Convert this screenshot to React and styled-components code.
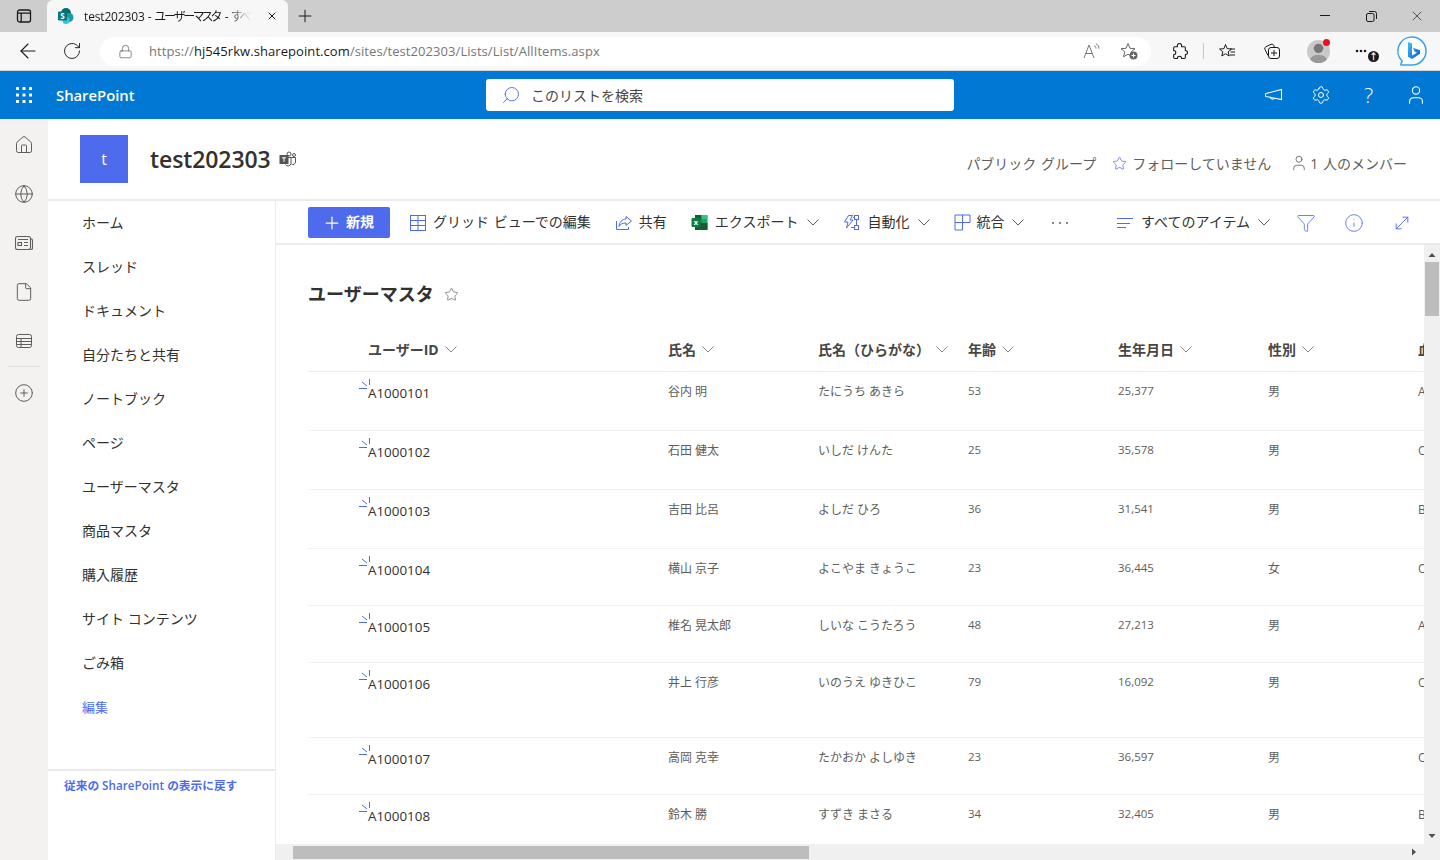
import styled, { createGlobalStyle } from "styled-components";
import {
  ArrowLeft,
  CirclePlus,
  File,
  Filter,
  Globe,
  Home,
  Info,
  Lock,
  MoveDiagonal,
  Plus,
  RotateCw,
  Search,
  Settings,
  Star,
  User,
  X,
} from "lucide-react";

const BLUE = "#4f6bed";
const FONT = `"Open Sans", "Noto Sans CJK JP", sans-serif`;

const GlobalStyle = createGlobalStyle`
  html, body { margin: 0; padding: 0; background: #fff; }
  body { font-family: ${FONT}; color: #323130; }
  * { box-sizing: border-box; }
`;

const NAV_ITEMS = [
  "ホーム",
  "スレッド",
  "ドキュメント",
  "自分たちと共有",
  "ノートブック",
  "ページ",
  "ユーザーマスタ",
  "商品マスタ",
  "購入履歴",
  "サイト コンテンツ",
  "ごみ箱",
];

const COLUMNS = [
  { label: "氏名", width: 150 },
  { label: "氏名（ひらがな）", width: 150 },
  { label: "年齢", width: 150, num: true },
  { label: "生年月日", width: 150, num: true },
  { label: "性別", width: 150 },
];

const ROWS = [
  { id: "A1000101", h: 59, cells: ["谷内 明", "たにうち あきら", "53", "25,377", "男"], blood: "A" },
  { id: "A1000102", h: 59, cells: ["石田 健太", "いしだ けんた", "25", "35,578", "男"], blood: "O" },
  { id: "A1000103", h: 59, cells: ["吉田 比呂", "よしだ ひろ", "36", "31,541", "男"], blood: "B" },
  { id: "A1000104", h: 57, cells: ["横山 京子", "よこやま きょうこ", "23", "36,445", "女"], blood: "O" },
  { id: "A1000105", h: 57, cells: ["椎名 晃太郎", "しいな こうたろう", "48", "27,213", "男"], blood: "A" },
  { id: "A1000106", h: 75, cells: ["井上 行彦", "いのうえ ゆきひこ", "79", "16,092", "男"], blood: "O" },
  { id: "A1000107", h: 57, cells: ["高岡 克幸", "たかおか よしゆき", "23", "36,597", "男"], blood: "O" },
  { id: "A1000108", h: 57, cells: ["鈴木 勝", "すずき まさる", "34", "32,405", "男"], blood: "B" },
];

const Page = styled.div`
  width: 1440px;
  height: 860px;
  display: flex;
  flex-direction: column;
  overflow: hidden;
`;

/* browser chrome */
const TabStrip = styled.div`
  height: 32px;
  background: #cdcdcd;
  display: flex;
  align-items: flex-end;
  flex-shrink: 0;
`;
const TabActions = styled.div`
  width: 47px;
  height: 32px;
  display: flex;
  align-items: center;
  justify-content: center;
`;
const Tab = styled.div`
  width: 241px;
  height: 32px;
  background: #f7f7f7;
  border-radius: 6px 6px 0 0;
  display: flex;
  align-items: center;
  padding: 0 10px;
  font-size: 12px;
  color: #1a1a1a;
  gap: 10px;
`;
const TabTitle = styled.span`
  flex: 1;
  white-space: nowrap;
  overflow: hidden;
  letter-spacing: -0.15px;
  font-feature-settings: "palt";
  mask-image: linear-gradient(90deg, #000 84%, transparent 97%);
`;
const Kana = styled.span`
  letter-spacing: -1.9px;
  margin-right: 2px;
`;
const NewTab = styled.div`
  width: 34px;
  height: 32px;
  display: flex;
  align-items: center;
  justify-content: center;
`;
const WindowButtons = styled.div`
  margin-left: auto;
  display: flex;
  height: 32px;
`;
const WindowButton = styled.div`
  width: 46px;
  display: flex;
  align-items: center;
  justify-content: center;
`;
const ToolBar = styled.div`
  height: 39px;
  background: #f7f7f7;
  border-bottom: 1px solid #d6d6d6;
  display: flex;
  align-items: center;
  flex-shrink: 0;
`;
const ToolButton = styled.div`
  width: ${(p) => p.$w || 44}px;
  height: 32px;
  padding-left: ${(p) => p.$pl || 0}px;
  display: flex;
  align-items: center;
  justify-content: center;
  flex-shrink: 0;
  position: relative;
`;
const Omnibox = styled.div`
  width: 1051px;
  height: 29px;
  margin-left: 12px;
  background: #fff;
  border-radius: 15px;
  display: flex;
  align-items: center;
  padding: 0 4px 0 18px;
  font-size: 13px;
  flex-shrink: 0;
`;
const Url = styled.div`
  margin-left: 16px;
  color: #767676;
  flex: 1;
  white-space: nowrap;
  letter-spacing: 0.07px;
  b {
    font-weight: 400;
    color: #1a1a1a;
  }
`;
const OmniIcon = styled.div`
  width: 37px;
  display: flex;
  justify-content: center;
  align-items: center;
`;
const ToolDivider = styled.div`
  width: 1px;
  height: 16px;
  background: #c8c8c8;
  flex-shrink: 0;
`;
const Avatar = styled.div`
  width: 23px;
  height: 23px;
  border-radius: 50%;
  background: #c9c9c9;
  overflow: hidden;
  display: flex;
`;
const RedDot = styled.span`
  position: absolute;
  width: 7px;
  height: 7px;
  border-radius: 50%;
  background: #e81123;
  right: 14px;
  top: 4px;
`;
const MoreBadge = styled.span`
  position: absolute;
  width: 11px;
  height: 11px;
  border-radius: 50%;
  background: #1a1a1a;
  right: 7px;
  bottom: 5px;
  color: #fff;
  font-size: 9px;
  font-weight: 700;
  line-height: 11px;
  text-align: center;
`;

/* suite bar */
const SuiteBar = styled.div`
  height: 48px;
  background: #0078d4;
  color: #fff;
  display: flex;
  align-items: center;
  flex-shrink: 0;
`;
const Waffle = styled.div`
  width: 48px;
  display: flex;
  justify-content: center;
`;
const Brand = styled.div`
  margin-left: 8px;
  width: 430px;
  font-size: 14.8px;
  font-weight: 600;
`;
const SearchBox = styled.div`
  width: 468px;
  height: 32px;
  background: #fff;
  border-radius: 3px;
  display: flex;
  align-items: center;
  gap: 10px;
  padding-left: 15px;
  font-size: 14px;
  color: #484644;
`;
const SuiteIcons = styled.div`
  margin-left: auto;
  display: flex;
  align-items: center;
`;
const SuiteIcon = styled.div`
  width: 47.5px;
  display: flex;
  align-items: center;
  justify-content: center;
  font-size: 21px;
  font-weight: 300;
`;

/* body */
const Body = styled.div`
  flex: 1;
  display: flex;
  min-height: 0;
`;
const Rail = styled.div`
  width: 48px;
  background: #f3f2f1;
  display: flex;
  flex-direction: column;
  align-items: center;
  padding-top: 1px;
  flex-shrink: 0;
`;
const RailIcon = styled.div`
  height: 49px;
  width: 48px;
  display: flex;
  align-items: center;
  justify-content: center;
  color: #605e5c;
`;
const RailDivider = styled.div`
  width: 32px;
  height: 1px;
  margin: 1px 0;
  background: #e1dfdd;
`;
const Site = styled.div`
  flex: 1;
  display: flex;
  flex-direction: column;
  min-width: 0;
`;
const SiteHeader = styled.div`
  height: 82px;
  border-bottom: 2px solid #edebe9;
  display: flex;
  align-items: flex-start;
  padding: 16px 33px 0 32px;
  flex-shrink: 0;
`;
const SiteLogo = styled.div`
  width: 48px;
  height: 48px;
  background: ${BLUE};
  color: #fff;
  font-size: 16px;
  display: flex;
  align-items: center;
  justify-content: center;
`;
const SiteName = styled.div`
  margin-left: 22px;
  height: 48px;
  display: flex;
  align-items: center;
  gap: 8px;
  font-size: 23px;
  font-weight: 600;
  letter-spacing: -0.1px;
  color: #323130;
`;
const SiteMeta = styled.div`
  margin-left: auto;
  margin-top: 17px;
  display: flex;
  align-items: center;
  height: 22px;
  font-size: 14px;
  color: #605e5c;
  white-space: nowrap;
`;
const MetaItem = styled.span`
  display: flex;
  align-items: center;
  gap: ${(p) => p.$gap || 3}px;
  margin-left: ${(p) => p.$ml || 0}px;
  word-spacing: 1px;
`;
const Columns = styled.div`
  flex: 1;
  display: flex;
  min-height: 0;
`;
const SideNav = styled.div`
  width: 228px;
  border-right: 1px solid #edebe9;
  display: flex;
  flex-direction: column;
  flex-shrink: 0;
`;
const NavItem = styled.div`
  height: 44px;
  display: flex;
  align-items: center;
  padding: 0 0 2px 34px;
  font-size: ${(p) => (p.$edit ? 13 : 14)}px;
  color: ${(p) => (p.$edit ? BLUE : "#323130")};
`;
const NavFooter = styled.div`
  margin-top: 40px;
  border-top: 2px solid #edebe9;
  padding: 5px 0 0 16px;
  font-size: 11.7px;
  color: ${BLUE};
  font-weight: 600;
`;
const Content = styled.div`
  flex: 1;
  min-width: 0;
  display: flex;
  flex-direction: column;
`;
const CommandBar = styled.div`
  height: 44px;
  border-bottom: 2px solid #edebe9;
  padding: 6px 28px 0 32px;
  display: flex;
  align-items: flex-start;
  gap: 24px;
  flex-shrink: 0;
  font-size: 14px;
`;
const NewButton = styled.div`
  width: 82px;
  height: 31px;
  background: ${BLUE};
  border-radius: 2px;
  color: #fff;
  font-weight: 600;
  display: flex;
  align-items: center;
  gap: 4px;
  padding-left: 14px;
  margin-right: -5px;
`;
const Command = styled.div`
  height: 31px;
  display: flex;
  align-items: center;
  gap: ${(p) => p.$gap || 7}px;
  margin-left: ${(p) => p.$ml || 0}px;
  margin-right: ${(p) => p.$mr || 0}px;
  color: #323130;
  white-space: nowrap;
`;
const Label = styled.span`
  margin-top: -3px;
  word-spacing: 1px;
`;
const CommandRight = styled.div`
  margin-left: auto;
  display: flex;
  gap: 28px;
`;
const ListArea = styled.div`
  flex: 1;
  min-height: 0;
  display: flex;
  flex-direction: column;
`;
const ListRow = styled.div`
  flex: 1;
  min-height: 0;
  display: flex;
`;
const Viewport = styled.div`
  flex: 1;
  min-width: 0;
  overflow: hidden;
  padding: 0 0 0 32px;
`;
const ListTitle = styled.div`
  height: 85px;
  padding-top: 37px;
  display: flex;
  align-items: flex-start;
  gap: 10px;
  font-size: 18px;
  font-weight: 700;
  line-height: 24px;
  color: #323130;
`;
const HeaderRow = styled.div`
  height: 42px;
  display: flex;
  align-items: center;
  border-bottom: 1px solid #edebe9;
  width: 1200px;
  font-size: 14px;
`;
const HeaderCell = styled.div`
  width: ${(p) => p.$w}px;
  flex-shrink: 0;
  display: flex;
  align-items: center;
  gap: 6px;
  padding-bottom: 3px;
  white-space: nowrap;
  color: #484644;
  font-weight: 700;
`;
const DataRow = styled.div`
  height: ${(p) => p.$h}px;
  display: flex;
  align-items: flex-start;
  border-bottom: 1px solid #f3f2f1;
  width: 1200px;
  font-size: 12px;
  color: #605e5c;
  flex-shrink: 0;
`;
const Spacer = styled.div`
  width: 60px;
  flex-shrink: 0;
`;
const IdCell = styled.div`
  width: 300px;
  flex-shrink: 0;
  position: relative;
  padding-top: 11px;
  font-size: 13.4px;
  line-height: 20px;
  color: #323130;
`;
const Glimmer = styled.svg`
  position: absolute;
  left: -9px;
  top: 7px;
`;
const Cell = styled.div`
  width: ${(p) => p.$w}px;
  flex-shrink: 0;
  padding-top: ${(p) => (p.$num ? 10 : 11)}px;
  line-height: 17px;
  font-size: ${(p) => (p.$num ? 11.5 : 12)}px;
`;
const VScroll = styled.div`
  width: 16px;
  background: #f0f0f0;
  flex-shrink: 0;
  display: flex;
  flex-direction: column;
  align-items: center;
  padding-top: 6px;
`;
const VThumb = styled.div`
  width: 14px;
  height: 54px;
  margin-top: 3px;
  background: #bdbdbd;
`;
const BottomArrow = styled.div`
  margin-top: auto;
  margin-bottom: 4px;
  display: flex;
`;
const HScroll = styled.div`
  height: 16px;
  background: #f0f0f0;
  display: flex;
  align-items: center;
  flex-shrink: 0;
`;
const HThumb = styled.div`
  width: 516px;
  height: 13px;
  margin-left: 11px;
  background: #bdbdbd;
`;
const ArrowLeftBox = styled.div`
  width: 5px;
  padding-left: 6px;
  display: flex;
`;
const ArrowRightBox = styled.div`
  margin-left: auto;
  padding-right: 22px;
  display: flex;
`;
const ChevronSvg = styled.svg`
  margin-left: ${(p) => p.$ml || 0}px;
  flex-shrink: 0;
`;

function Chevron({ color = "#605e5c", ml }) {
  return (
    <ChevronSvg $ml={ml} width="12" height="7" viewBox="0 0 12 7" fill="none" stroke={color}>
      <path d="M.5.5 6 6 11.500.5" />
    </ChevronSvg>
  );
}

function TabsIcon() {
  return (
    <svg width="16" height="16" viewBox="0 0 16 16" fill="none" stroke="#1a1a1a" strokeWidth="1.3">
      <rect x="1.5" y="2" width="13" height="12" rx="2" />
      <path d="M1.5 5.2h13M5.2 5.2V14" />
    </svg>
  );
}

function SharePointFavicon() {
  return (
    <svg width="17" height="16" viewBox="0 0 17 16" style={{ flexShrink: 0 }}>
      <circle cx="9" cy="5" r="5" fill="#036c70" />
      <circle cx="12" cy="9.5" r="4.5" fill="#1a9ba1" />
      <circle cx="9" cy="12.5" r="3.5" fill="#37c6d0" />
      <rect x="1" y="3.5" width="9" height="9" rx="1" fill="#03787c" />
      <text x="5.5" y="11" fontSize="8" fontWeight="700" fill="#fff" textAnchor="middle">
        S
      </text>
    </svg>
  );
}

function MinimizeIcon() {
  return (
    <svg width="10" height="2" viewBox="0 0 10 2" stroke="#1a1a1a">
      <path d="M0 .5h10" />
    </svg>
  );
}

function RestoreIcon() {
  return (
    <svg width="11" height="11" viewBox="0 0 11 11" fill="none" stroke="#1a1a1a">
      <rect x="0.5" y="2.5" width="7.5" height="8" rx="1.5" />
      <path d="M3 .5h5.5a2 2 0 0 1 2 2V8" />
    </svg>
  );
}

function ReadAloud() {
  return (
    <svg width="18" height="16" viewBox="0 0 18 16" fill="none" stroke="#767676">
      <path d="M1 15 6 2l5 13M2.8 10.5h6.4" />
      <path d="M11 2.500c1.200.6 2 1.600 2 3M13 .8c2 1 3 2.600 3 4.800" />
    </svg>
  );
}

function StarAdd() {
  return (
    <svg width="18" height="18" viewBox="0 0 18 18">
      <path
        d="M8 1.500 10 6.300l5 .4-3.800 3.200 1.200 4.900L8 12.200l-4.400 2.600 1.200-4.900L1 6.700l5-.4z"
        fill="none"
        stroke="#666"
      />
      <circle cx="13.500" cy="13.500" r="4" fill="#666" />
      <path d="M11.500 13.500h4M13.500 11.500v4" stroke="#fff" />
    </svg>
  );
}

function ExtensionIcon() {
  return (
    <svg width="17" height="17" viewBox="0 0 16 16" fill="none" stroke="#1a1a1a">
      <path d="M6 2.500a2 2 0 0 1 4 0V3.500h2.500a1 1 0 0 1 1 1V7a2 2 0 0 1 0 4v2.500a1 1 0 0 1-1 1H10a2 2 0 0 0-4 0H3.500a1 1 0 0 1-1-1V11a2 2 0 0 0 0-4V4.500a1 1 0 0 1 1-1H6z" />
    </svg>
  );
}

function FavoritesIcon() {
  return (
    <svg width="18" height="16" viewBox="0 0 18 16" fill="none" stroke="#1a1a1a">
      <path d="M6.500 1.500 8.200 5.700l4.300.3-3.300 2.800 1 4.200-3.700-2.300L2.800 13l1-4.200L.6 6l4.300-.3z" />
      <path d="M11 6h5M11.500 9h4.500M11 12h5" />
    </svg>
  );
}

function CollectionsIcon() {
  return (
    <svg width="18" height="18" viewBox="0 0 18 18" fill="none" stroke="#1a1a1a">
      <rect x="5.500" y="5.500" width="11" height="11" rx="2.500" />
      <path d="M11 8v6M8 11h6" />
      <path d="M5 13.500 2 7.500a2 2 0 0 1 1-2.800L8 2.300a2 2 0 0 1 2.700 1l.6 1.700" />
    </svg>
  );
}

function BingIcon() {
  return (
    <svg width="32" height="32" viewBox="0 0 32 32">
      <defs>
        <linearGradient id="bingB" x1="0" y1="0" x2="1" y2="1">
          <stop offset="0" stopColor="#36c3f0" />
          <stop offset="1" stopColor="#1259d6" />
        </linearGradient>
      </defs>
      <path
        d="M16 2a14 14 0 0 1 0 28H5.500c-.8 0-1-.8-.6-1.400l1.400-2.400A14 14 0 0 1 16 2z"
        fill="#fff"
        stroke="#3aa0ee"
        strokeWidth="1.500"
      />
      <path d="M12 7l4 1.500v12l5-2.800-2.500-1.200-1.500-3.800 7 2.500v3.500L16 24l-4-2.200z" fill="url(#bingB)" />
    </svg>
  );
}

function WaffleIcon() {
  const dots = [];
  for (let r = 0; r < 3; r++) {
    for (let c = 0; c < 3; c++) {
      dots.push(<rect key={`${r}-${c}`} x={c * 6.5} y={r * 6.5} width="3" height="3" rx="0.6" fill="#fff" />);
    }
  }
  return (
    <svg width="16" height="16" viewBox="0 0 16 16">
      {dots}
    </svg>
  );
}

function MegaphoneIcon() {
  return (
    <svg width="18" height="14" viewBox="0 0 18 14" fill="none" stroke="#fff" strokeWidth="1.100">
      <path d="M1 5.500 16.500 1.500v10L1 8.500c-.6-.2-.6-2.800 0-3z" />
      <path d="M5.500 9.500c.2 2 3.300 2.300 4 .6" />
    </svg>
  );
}

function TeamsIcon() {
  return (
    <svg width="18" height="16" viewBox="0 0 18 16" fill="none" stroke="#555">
      <circle cx="10" cy="3" r="2" />
      <circle cx="15" cy="4" r="1.500" />
      <path d="M8 6.500h8.500V11a2.500 2.500 0 0 1-4 2" />
      <path d="M7 6.500h5v6a3 3 0 0 1-5.500 1" />
      <rect x="1" y="4.500" width="8" height="8" fill="#555" />
      <path d="M3 6.800h4M5 6.800v4" stroke="#fff" />
    </svg>
  );
}

function NewsIcon() {
  return (
    <svg width="18" height="16" viewBox="0 0 18 16" fill="none" stroke="currentColor" strokeWidth="1.100">
      <rect x="0.500" y="1.500" width="15" height="13" rx="2" />
      <path d="M15.500 4h.5a1.500 1.500 0 0 1 1.500 1.500V13a1.500 1.500 0 0 1-2 1.400" />
      <path d="M3 4.500h10M9 7.500h4M9 10.500h4" />
      <rect x="3" y="7.500" width="3.500" height="3" />
    </svg>
  );
}

function ListIcon() {
  return (
    <svg width="18" height="18" viewBox="0 0 18 18" fill="none" stroke="#605e5c">
      <rect x="1.500" y="2.500" width="15" height="13" rx="2" />
      <path d="M1.500 6.500h15M1.500 9.500h15M1.500 12.500h15M6 6.500v9" />
    </svg>
  );
}

function GridIcon() {
  return (
    <svg width="18" height="18" viewBox="0 0 18 18" fill="none" stroke={BLUE}>
      <rect x="1.500" y="1.500" width="15" height="15" />
      <path d="M1.500 6.500h15M1.500 11.500h15M9 1.500v15" />
    </svg>
  );
}

function ShareIcon() {
  return (
    <svg width="18" height="16" viewBox="0 0 18 16" fill="none" stroke={BLUE}>
      <path d="M11 1.500 16.500 6 11 10.500V8c-3.500 0-5.500 1-7 3.500C4.500 7 7 4.300 11 4z" />
      <path d="M1.500 6v8.500h12V12" />
    </svg>
  );
}

function ExcelIcon() {
  return (
    <svg width="17" height="17" viewBox="0 0 17 17">
      <rect x="4" y="1" width="12.500" height="15" rx="1" fill="#21a366" />
      <rect x="4" y="1" width="6.500" height="4" fill="#185c37" />
      <rect x="10.500" y="1" width="6" height="4" fill="#33c481" />
      <rect x="4" y="5" width="6.500" height="4" fill="#107c41" />
      <rect x="4" y="9" width="12.500" height="7" fill="#185c37" />
      <rect x="0.500" y="4" width="9" height="9" rx="1" fill="#107c41" />
      <text x="5" y="11.200" fontSize="7.500" fontWeight="700" fill="#fff" textAnchor="middle">
        x
      </text>
    </svg>
  );
}

function AutomateIcon() {
  return (
    <svg width="17" height="17" viewBox="0 0 17 17" fill="none" stroke={BLUE}>
      <path d="M5.500 1.500h4L7 6h3L3.500 14 5 8H1.500z" />
      <rect x="11.500" y="1.500" width="4" height="4" />
      <rect x="11.500" y="11.500" width="4" height="4" />
      <path d="M13.500 5.500v6M8 13.500h3.500M10 3.500h1.500" />
    </svg>
  );
}

function IntegrateIcon() {
  return (
    <svg width="17" height="17" viewBox="0 0 17 17" fill="none" stroke={BLUE}>
      <path d="M1 1h15v7.500H8.500V16H1zM1 8.500h7.500M8.500 1v7.500" />
    </svg>
  );
}

function ViewIcon() {
  return (
    <svg width="16" height="12" viewBox="0 0 16 12" fill="none" stroke={BLUE}>
      <path d="M0 1.500h16M0 6.500h13M0 10.500h9" />
    </svg>
  );
}

function GlimmerIcon() {
  return (
    <Glimmer width="11" height="10" viewBox="0 0 11 10" fill="none" stroke={BLUE}>
      <path d="M10.500 0v6M3 3l5 4M0 9.500h8" />
    </Glimmer>
  );
}

function Caret({ d, size = 8 }) {
  return (
    <svg width={size} height={size} viewBox="0 0 8 8">
      <path d={d} fill="#505050" />
    </svg>
  );
}

function App() {
  return (
    <Page>
      <GlobalStyle />
      <TabStrip>
        <TabActions>
          <TabsIcon />
        </TabActions>
        <Tab>
          <SharePointFavicon />
          <TabTitle>
            test202303 - <Kana>ユーザーマスタ</Kana> - <Kana>すべてのアイテム</Kana>
          </TabTitle>
          <X size={12} color="#1a1a1a" />
        </Tab>
        <NewTab>
          <Plus size={20} strokeWidth={1.2} color="#1a1a1a" />
        </NewTab>
        <WindowButtons>
          <WindowButton>
            <MinimizeIcon />
          </WindowButton>
          <WindowButton>
            <RestoreIcon />
          </WindowButton>
          <WindowButton>
            <X size={16} strokeWidth={1} color="#1a1a1a" />
          </WindowButton>
        </WindowButtons>
      </TabStrip>
      <ToolBar>
        <ToolButton $w={56}>
          <ArrowLeft size={24} strokeWidth={1.1} color="#1a1a1a" />
        </ToolButton>
        <ToolButton $w={32}>
          <RotateCw size={20} strokeWidth={1.1} color="#1a1a1a" />
        </ToolButton>
        <Omnibox>
          <Lock size={15} strokeWidth={1.2} color="#666" />
          <Url>
            https://<b>hj545rkw.sharepoint.com</b>/sites/test202303/Lists/List/AllItems.aspx
          </Url>
          <OmniIcon>
            <ReadAloud />
          </OmniIcon>
          <OmniIcon>
            <StarAdd />
          </OmniIcon>
        </Omnibox>
        <ToolButton $w={52} $pl={4}>
          <ExtensionIcon />
        </ToolButton>
        <ToolDivider />
        <ToolButton $w={48}>
          <FavoritesIcon />
        </ToolButton>
        <ToolButton $w={40}>
          <CollectionsIcon />
        </ToolButton>
        <ToolButton $w={52}>
          <Avatar>
            <svg width="23" height="23" viewBox="0 0 22 22">
              <circle cx="11" cy="8" r="4.500" fill="#777" />
              <ellipse cx="11" cy="19" rx="8" ry="5" fill="#999" />
            </svg>
          </Avatar>
          <RedDot />
        </ToolButton>
        <ToolButton $w={42}>
          <svg width="12" height="4" viewBox="0 0 12 4" style={{ marginRight: 8 }}>
            <circle cx="2" cy="2" r="1.300" fill="#1a1a1a" />
            <circle cx="6" cy="2" r="1.300" fill="#1a1a1a" />
            <circle cx="10" cy="2" r="1.300" fill="#1a1a1a" />
          </svg>
          <MoreBadge>↑</MoreBadge>
        </ToolButton>
        <ToolButton $w={52}>
          <BingIcon />
        </ToolButton>
      </ToolBar>
      <SuiteBar>
        <Waffle>
          <WaffleIcon />
        </Waffle>
        <Brand>SharePoint</Brand>
        <SearchBox>
          <Search size={20} strokeWidth={1.1} color={BLUE} style={{ transform: "scaleX(-1)" }} />
          このリストを検索
        </SearchBox>
        <SuiteIcons>
          <SuiteIcon>
            <MegaphoneIcon />
          </SuiteIcon>
          <SuiteIcon>
            <Settings size={20} strokeWidth={1.200} />
          </SuiteIcon>
          <SuiteIcon>?</SuiteIcon>
          <SuiteIcon>
            <User size={22} strokeWidth={1.200} />
          </SuiteIcon>
        </SuiteIcons>
      </SuiteBar>
      <Body>
        <Rail>
          <RailIcon>
            <Home size={20} strokeWidth={1.200} />
          </RailIcon>
          <RailIcon>
            <Globe size={20} strokeWidth={1.200} />
          </RailIcon>
          <RailIcon>
            <NewsIcon />
          </RailIcon>
          <RailIcon>
            <File size={20} strokeWidth={1.200} />
          </RailIcon>
          <RailIcon>
            <ListIcon />
          </RailIcon>
          <RailDivider />
          <RailIcon>
            <CirclePlus size={20} strokeWidth={1.200} />
          </RailIcon>
        </Rail>
        <Site>
          <SiteHeader>
            <SiteLogo>t</SiteLogo>
            <SiteName>
              test202303
              <TeamsIcon />
            </SiteName>
            <SiteMeta>
              <MetaItem>パブリック グループ</MetaItem>
              <MetaItem $ml={16} $gap={5}>
                <Star size={15} strokeWidth={1.200} color={BLUE} />
                <span>フォローしていません</span>
              </MetaItem>
              <MetaItem $ml={19} $gap={2}>
                <User size={18} strokeWidth={1.100} />
                <span>1 人のメンバー</span>
              </MetaItem>
            </SiteMeta>
          </SiteHeader>
          <Columns>
            <SideNav>
              {NAV_ITEMS.map((item) => (
                <NavItem key={item}>{item}</NavItem>
              ))}
              <NavItem $edit>編集</NavItem>
              <NavFooter>従来の SharePoint の表示に戻す</NavFooter>
            </SideNav>
            <Content>
              <CommandBar>
                <NewButton>
                  <Plus size={20} strokeWidth={1.500} />
                  <Label>新規</Label>
                </NewButton>
                <Command $gap={6}>
                  <GridIcon />
                  <Label>グリッド ビューでの編集</Label>
                </Command>
                <Command $gap={6}>
                  <ShareIcon />
                  <Label>共有</Label>
                </Command>
                <Command>
                  <ExcelIcon />
                  <Label>エクスポート</Label>
                  <Chevron ml={2} />
                </Command>
                <Command>
                  <AutomateIcon />
                  <Label>自動化</Label>
                  <Chevron ml={2} />
                </Command>
                <Command $gap={5}>
                  <IntegrateIcon />
                  <Label>統合</Label>
                  <Chevron ml={3} />
                </Command>
                <Command $ml={3}>
                  <svg width="18" height="4" viewBox="0 0 18 4" fill="#605e5c">
                    <circle cx="2" cy="2" r="1" />
                    <circle cx="9" cy="2" r="1" />
                    <circle cx="16" cy="2" r="1" />
                  </svg>
                </Command>
                <CommandRight>
                  <Command $gap={8} $mr={-2}>
                    <ViewIcon />
                    <Label>すべてのアイテム</Label>
                    <Chevron />
                  </Command>
                  <Command>
                    <Filter size={20} strokeWidth={1} color={BLUE} />
                  </Command>
                  <Command>
                    <Info size={20} strokeWidth={1} color={BLUE} />
                  </Command>
                  <Command>
                    <MoveDiagonal size={20} strokeWidth={1.100} color={BLUE} />
                  </Command>
                </CommandRight>
              </CommandBar>
              <ListArea>
                <ListRow>
                  <Viewport>
                    <ListTitle>
                      ユーザーマスタ
                      <Star size={15} strokeWidth={1.100} color="#605e5c" style={{ marginTop: 5 }} />
                    </ListTitle>
                    <HeaderRow>
                      <Spacer />
                      <HeaderCell $w={300}>
                        ユーザーID
                        <Chevron color="#8a8886" />
                      </HeaderCell>
                      {COLUMNS.map((col) => (
                        <HeaderCell key={col.label} $w={col.width}>
                          {col.label}
                          <Chevron color="#8a8886" />
                        </HeaderCell>
                      ))}
                      <HeaderCell $w={100}>血液型</HeaderCell>
                    </HeaderRow>
                    {ROWS.map((row) => (
                      <DataRow key={row.id} $h={row.h}>
                        <Spacer />
                        <IdCell>
                          <GlimmerIcon />
                          {row.id}
                        </IdCell>
                        {row.cells.map((text, i) => (
                          <Cell key={i} $w={COLUMNS[i].width} $num={COLUMNS[i].num}>
                            {text}
                          </Cell>
                        ))}
                        <Cell $w={100}>{row.blood}</Cell>
                      </DataRow>
                    ))}
                  </Viewport>
                  <VScroll>
                    <Caret d="M4 2 7.500 6H.5z" />
                    <VThumb />
                    <BottomArrow>
                      <Caret d="M4 6 .5 2h7z" />
                    </BottomArrow>
                  </VScroll>
                </ListRow>
                <HScroll>
                  <ArrowLeftBox>
                    <Caret d="M2 4 6 .5v7z" />
                  </ArrowLeftBox>
                  <HThumb />
                  <ArrowRightBox>
                    <Caret d="M6 4 2 .5v7z" />
                  </ArrowRightBox>
                </HScroll>
              </ListArea>
            </Content>
          </Columns>
        </Site>
      </Body>
    </Page>
  );
}

export default App;
